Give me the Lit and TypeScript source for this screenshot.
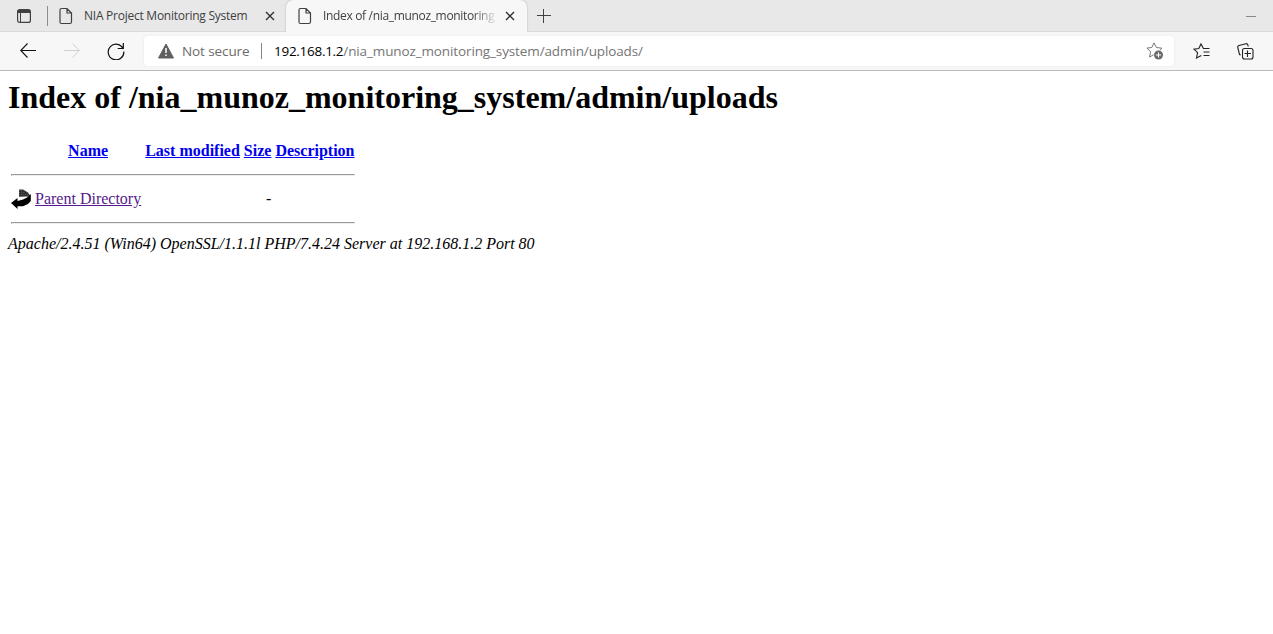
import { LitElement, html, css, svg } from "lit";
import { customElement } from "lit/decorators.js";

const fileIcon = html`<svg class="file" width="14" height="18" viewBox="0 0 14 18" fill="none" stroke="#404040" stroke-width="1.2">
  <path d="M2.5 1.5H8L12.5 6V14.7Q12.5 16.5 10.8 16.5H2.5Q1 16.5 1 15V3Q1 1.5 2.5 1.5ZM8 1.7V6H12.3" /></svg>`;
const closeIcon = html`<svg class="close" width="10" height="10" viewBox="0 0 10 10" stroke="#303030" stroke-width="1.35"><path d="M1 1L9 9M9 1L1 9" /></svg>`;
const star = svg`<path d="M14 8.2L15.9 6.2L10.4 5.5L8 .9L5.8 5.5L.9 6.1L4.6 9.7L3.5 15L7.5 12.8" />`;

@customElement("browser-tabs")
class BrowserTabs extends LitElement {
  static styles = css`
    :host { display: flex; height: 32px; box-sizing: border-box; background: #e8e8e8; border-bottom: 1px solid #dadada; font: 12px "Open Sans", sans-serif; color: #404040; }
    svg { display: block; flex: none; }
    .panel { margin: 9px 0 0 17px; }
    .rule { width: 1px; height: 20px; margin: 6px 0 0 16px; background: #8c8c8c; }
    .tab { display: flex; align-items: center; height: 32px; box-sizing: border-box; }
    .first { width: 238px; padding-left: 11px; }
    .active { width: 241px; padding-left: 12px; background: #f7f7f7; border-radius: 7px 7px 0 0; box-shadow: 0 0 2px #aaa; clip-path: inset(0 -3px 0 -3px); }
    .title { white-space: nowrap; overflow: hidden; line-height: 18px; margin-left: 11px; }
    .first .title { width: 171px; letter-spacing: -0.25px; }
    .active .title { width: 172px; letter-spacing: -0.33px; -webkit-mask-image: linear-gradient(90deg, #000 150px, transparent 175px); mask-image: linear-gradient(90deg, #000 150px, transparent 175px); }
    .close { margin-left: 10px; }
    .plus { margin: 9px 0 0 10px; }
    .min { width: 10px; height: 1px; margin: 16px 17px 0 auto; background: #888; }
  `;
  render() {
    return html`
      <svg class="panel" width="14" height="14" viewBox="0 0 14 14" fill="none" stroke="#404040">
        <rect x=".6" y=".6" width="12.8" height="12.8" rx="2" stroke-width="1.2" /><path d="M1 2.5H13" stroke-width="3" /><path d="M3.5 4V13" /></svg>
      <div class="rule"></div>
      <div class="tab first">${fileIcon}<div class="title">NIA Project Monitoring System</div>${closeIcon}</div>
      <div class="tab active">${fileIcon}<div class="title">Index of /nia_munoz_monitoring_</div>${closeIcon}</div>
      <svg class="plus" width="14" height="14" viewBox="0 0 14 14" stroke="#404040"><path d="M6.5 0V14M0 6.5H14" /></svg>
      <div class="min"></div>`;
  }
}

@customElement("address-bar")
class AddressBar extends LitElement {
  static styles = css`
    :host { display: flex; align-items: center; height: 39px; box-sizing: border-box; background: #f7f7f7; border-bottom: 1px solid #bababa; font: 14px "Open Sans", sans-serif; color: #6b6b6b; }
    svg { display: block; flex: none; }
    .back { margin-left: 20px; }
    .forward { margin-left: 28px; }
    .reload { margin-left: 27px; }
    .field { display: flex; align-items: center; width: 1030px; height: 30px; box-sizing: border-box; margin-left: 19px; padding: 0 10px 0 14px; background: #fff; border-radius: 4px; box-shadow: 0 0 3px #e8e8e8; }
    .label { width: 68px; margin-left: 8px; white-space: nowrap; font-size: 13.5px; letter-spacing: -0.1px; }
    .rule { width: 1px; height: 16px; margin: 0 12px 0 11px; background: #858585; }
    .url { flex: 1; white-space: nowrap; font-size: 13.5px; letter-spacing: -0.12px; color: #757575; }
    .host { color: #000; letter-spacing: -0.28px; }
    .favs { margin-left: 19px; }
    .collections { margin-left: 27px; }
  `;
  render() {
    return html`
      <svg class="back" width="16" height="16" viewBox="0 0 16 16" fill="none" stroke="#111"><path d="M16 7.5H.8M7.5 .5L.7 7.5L7.5 14.5" stroke-width="1.1" /></svg>
      <svg class="forward" width="16" height="16" viewBox="0 0 16 16" fill="none" stroke="#cfcfcf"><path d="M0 7.5H15.2M8.5 .5L15.3 7.5L8.5 14.5" /></svg>
      <svg class="reload" width="18" height="18" viewBox="0 0 18 18" fill="none" stroke="#111" stroke-width="1.2"><path d="M16.2 7A7.8 7.8 0 1 0 16.8 9.5M16.3 1V6.5H10.7" /></svg>
      <div class="field">
        <svg width="16" height="16" viewBox="0 0 16 16"><path d="M8 1L15.5 15H.5Z" fill="#606060" stroke="#606060" stroke-linejoin="round" /><path d="M8 5V10M8 11.5V13" stroke="#fff" stroke-width="1.5" /></svg>
        <span class="label">Not secure</span>
        <span class="rule"></span>
        <span class="url"><span class="host">192.168.1.2</span>/nia_munoz_monitoring_system/admin/uploads/</span>
        <svg width="18" height="18" viewBox="0 0 18 18" fill="none" stroke="#767676">${star}<circle cx="12.5" cy="13" r="4.5" fill="#6b6b6b" stroke="none" /><path d="M12.5 10.5V15.5M10 13H15" stroke="#fff" /></svg>
      </div>
      <svg class="favs" width="17" height="17" viewBox="0 0 17 17" fill="none" stroke="#222" stroke-width="1.1"><path d="M12 5.5H10.4L8 .9L5.8 5.5L.9 6.1L4.6 9.7L3.5 15L8.3 12.5" /><path d="M10.5 5.5H16.5M10.5 9H16.5M10.5 12.5H16.5" /></svg>
      <svg class="collections" width="17" height="17" viewBox="0 0 17 17" fill="none" stroke="#222" stroke-width="1.1"><path d="M3.7 12L2.5 11.5L.8 4.5Q.4 3 2 2.5L9 .7Q10.4.4 10.8 1.8L11.3 3.5" /><rect x="5.5" y="5.5" width="10.5" height="10.5" rx="2" /><path d="M10.5 7.5V14M7.5 10.5H14" /></svg>`;
  }
}

@customElement("app-root")
class AppRoot extends LitElement {
  static styles = css`
    :host { display: block; height: 634px; overflow: hidden; background: #fff; color: #000; }
    .page { padding: 8px 8px 0; font: 16px "Liberation Serif", serif; }
    h1 { font-size: 32px; line-height: 37px; margin: 0 0 21px; }
    table { border-spacing: 2px; }
    td, th { padding: 1px; }
    .icon { display: block; width: 20px; height: 22px; }
    .blank { visibility: hidden; }
    a { color: #0000ee; text-decoration: underline; white-space: nowrap; }
    .visited { color: #551a8b; }
    .size { text-align: right; }
    hr { margin: 8px 0; border: 1px inset #808080; border-color: #9a9a9a #eee #eee #9a9a9a; border-style: solid; }
    address { font-style: italic; }
  `;
  render() {
    return html`
      <browser-tabs></browser-tabs>
      <address-bar></address-bar>
      <main class="page">
        <h1>Index of /nia_munoz_monitoring_system/admin/uploads</h1>
        <table>
          <tr><th><span class="icon blank"></span></th><th><a>Name</a></th><th><a>Last modified</a></th><th><a>Size</a></th><th><a>Description</a></th></tr>
          <tr><th colspan="5"><hr /></th></tr>
          <tr><td><svg class="icon" viewBox="0 0 20 22">
            <path d="M8 1.5H12L17 4.5L19 7.5V9L15 8.5L8 8.8Z" fill="#333" />
            <path d="M19.8 6V13L17 16L12 18.2H6.5V21L0 15L6.5 10V13L12 11.5L17 9Z" fill="#000" />
            <path d="M8 2.5H12M8 4.5H14M8 6.5H17" stroke="#777" stroke-width=".5" stroke-dasharray="1 1" /></svg></td>
            <td><a class="visited">Parent Directory</a></td><td></td><td class="size">-</td><td></td></tr>
          <tr><th colspan="5"><hr /></th></tr>
        </table>
        <address>Apache/2.4.51 (Win64) OpenSSL/1.1.1l PHP/7.4.24 Server at 192.168.1.2 Port 80</address>
      </main>`;
  }
}
